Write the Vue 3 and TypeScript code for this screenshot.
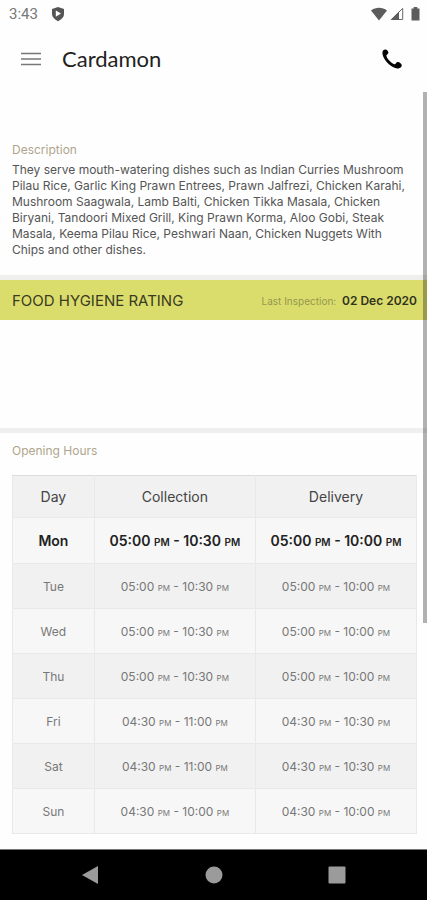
<script setup lang="ts">
interface Span {
  from: string
  to: string
}
interface OpeningDay {
  day: string
  collection: Span
  delivery: Span
}

const restaurant = 'Cardamon'
const description =
  'They serve mouth-watering dishes such as Indian Curries Mushroom Pilau Rice, Garlic King Prawn Entrees, Prawn Jalfrezi, Chicken Karahi, Mushroom Saagwala, Lamb Balti, Chicken Tikka Masala, Chicken Biryani, Tandoori Mixed Grill, King Prawn Korma, Aloo Gobi, Steak Masala, Keema Pilau Rice, Peshwari Naan, Chicken Nuggets With Chips and other dishes.'
const today = 'Mon'

const row = (day: string, cFrom: string, cTo: string, dFrom: string, dTo: string): OpeningDay => ({
  day,
  collection: { from: cFrom, to: cTo },
  delivery: { from: dFrom, to: dTo },
})

const hours: OpeningDay[] = [
  row('Mon', '05:00', '10:30', '05:00', '10:00'),
  row('Tue', '05:00', '10:30', '05:00', '10:00'),
  row('Wed', '05:00', '10:30', '05:00', '10:00'),
  row('Thu', '05:00', '10:30', '05:00', '10:00'),
  row('Fri', '04:30', '11:00', '04:30', '10:30'),
  row('Sat', '04:30', '11:00', '04:30', '10:30'),
  row('Sun', '04:30', '10:00', '04:30', '10:00'),
]
</script>

<template>
  <div class="screen">
    <div class="status">
      <span class="clock">3:43</span>
      <svg class="shield" width="14" height="16" viewBox="0 0 14 16" aria-hidden="true">
        <path d="M7 1 13 3v5c0 3-2.500 5.600-6 7.200C3.500 13.600 1 11 1 8V3Z" fill="#555" />
        <path d="M4.800 4.500 10 7.600 4.800 10.700Z" fill="#fff" />
      </svg>
      <div class="signals">
        <svg width="16" height="14" viewBox="0 0 16 14" aria-hidden="true">
          <path d="M0 3.500C4.500-.2 11.500-.2 16 3.500L8 13.500Z" fill="#5c5c5c" />
        </svg>
        <svg width="14" height="14" viewBox="0 0 14 14" aria-hidden="true">
          <path d="M1.500 12.500H12.700V1.300Z" fill="#fff" stroke="#6a6a6a" />
          <path d="M.5 13 9 4.500V13Z" fill="#5c5c5c" />
        </svg>
        <svg class="battery" width="9" height="14" viewBox="0 0 9 14" aria-hidden="true">
          <path d="M2.700 0H6.300V1.500H8.500V13.500H.5V1.500H2.700Z" fill="#5c5c5c" />
        </svg>
      </div>
    </div>

    <header class="appbar">
      <button type="button" class="icon-button" aria-label="Menu">
        <svg width="20" height="14" viewBox="0 0 20 14" aria-hidden="true">
          <path d="M0 1.500H20M0 7H20M0 12.500H20" stroke="#777" stroke-width="1.600" />
        </svg>
      </button>
      <h1>{{ restaurant }}</h1>
      <button type="button" class="icon-button call" aria-label="Call">
        <svg width="20" height="20" viewBox="0 0 20 20" aria-hidden="true">
          <path
            d="M1.100 1.600C2 .5 3.600.2 4.700.9c1.500 1 2.100 2.700 1.300 3.900-.5.800-1.500.9-1.600 1.800C4.400 9.300 9.300 14.600 12.600 15.200c1.100.2 1.200-1.100 2-1.700 1-.8 2.500-.5 3.900.8 1.500 1.300 1.600 2.400.6 3.600-1.200 1.400-3.600 1.900-6 1.100C7.400 17.200 1.700 10.700.6 5.500.3 4 .4 2.500 1.100 1.600Z"
            fill="#050505"
          />
        </svg>
      </button>
    </header>

    <main class="content">
      <section class="about">
        <h2>Description</h2>
        <p>{{ description }}</p>
      </section>

      <section class="hygiene">
        <div class="band">
          <h3>FOOD HYGIENE RATING</h3>
          <p>Last Inspection: <time datetime="2020-12-02">02 Dec 2020</time></p>
        </div>
      </section>

      <section class="opening">
        <h2 id="hours-title">Opening Hours</h2>
        <table aria-labelledby="hours-title">
          <thead>
            <tr>
              <th scope="col" class="day">Day</th>
              <th scope="col">Collection</th>
              <th scope="col">Delivery</th>
            </tr>
          </thead>
          <tbody>
            <tr v-for="h in hours" :key="h.day" :class="{ today: h.day === today }">
              <th scope="row">{{ h.day }}</th>
              <td>{{ h.collection.from }} <small>PM</small> - {{ h.collection.to }} <small>PM</small></td>
              <td>{{ h.delivery.from }} <small>PM</small> - {{ h.delivery.to }} <small>PM</small></td>
            </tr>
          </tbody>
        </table>
      </section>
      <div class="scroll-thumb"></div>
    </main>

    <nav class="system-nav" aria-label="System">
      <button type="button" aria-label="Back">
        <svg width="18" height="20" viewBox="0 0 18 20" aria-hidden="true">
          <path d="M16 1V19L0 10Z" fill="#9b9b9b" />
        </svg>
      </button>
      <button type="button" aria-label="Home">
        <svg width="18" height="18" viewBox="0 0 18 18" aria-hidden="true">
          <circle cx="9" cy="9" r="8.500" fill="#9b9b9b" />
        </svg>
      </button>
      <button type="button" aria-label="Recent apps">
        <svg width="18" height="18" viewBox="0 0 18 18" aria-hidden="true">
          <rect x=".5" y=".5" width="17" height="17" rx="1" fill="#9b9b9b" />
        </svg>
      </button>
    </nav>
  </div>
</template>

<style>
body {
  margin: 0;
  background: #fefefe;
}
</style>

<style scoped>
.screen {
  display: flex;
  flex-direction: column;
  min-height: 100vh;
  background: #fefefe;
  color: #555;
  font-family: Inter, "Open Sans", sans-serif;
}
h1,
h2,
h3,
p {
  margin: 0;
  font-weight: 400;
}
button {
  display: flex;
  align-items: center;
  justify-content: center;
  padding: 0;
  border: 0;
  background: none;
}
.status {
  display: flex;
  align-items: center;
  gap: 13px;
  height: 28px;
  padding: 0 7px 0 9px;
}
.clock {
  color: #777;
  font-family: Roboto, sans-serif;
  font-size: 15px;
}
.signals {
  display: flex;
  align-items: center;
  gap: 3px;
  margin-left: auto;
}
.battery {
  margin-left: 4px;
}
.appbar {
  display: flex;
  align-items: center;
  gap: 20px;
  height: 62px;
  padding: 0 24px 0 20px;
}
.icon-button {
  width: 22px;
  height: 40px;
}
.call {
  margin-left: auto;
}
h1 {
  padding-bottom: 2px;
  color: #222;
  font-family: Lato, sans-serif;
  font-size: 22px;
}
.content {
  position: relative;
  flex: 1;
}
h2 {
  color: #b0a58c;
  font-size: 12px;
  line-height: 16px;
}
.about {
  padding: 52px 12px 17px;
}
.about p {
  margin-top: 4px;
  font-size: 12px;
  line-height: 16px;
}
.hygiene {
  padding-bottom: 108px;
  border-top: 5px solid #efefed;
}
.band {
  display: flex;
  align-items: center;
  justify-content: space-between;
  height: 40px;
  padding: 0 10px 0 12px;
  background: #dadd6c;
}
.band h3 {
  color: #3b3b22;
  font-size: 15px;
}
.band p {
  color: #96974f;
  font-size: 10px;
}
.band time {
  margin-left: 3px;
  color: #33331c;
  font-size: 12px;
  font-weight: 600;
}
.opening {
  padding: 10px 10px 14px 12px;
  border-top: 5px solid #efefef;
}
table {
  width: 100%;
  margin-top: 16px;
  border-collapse: collapse;
  table-layout: fixed;
  background: #f7f7f7;
  text-align: center;
}
th,
td {
  height: 44px;
  padding: 0;
  border: 1px solid #e9e9e9;
  color: #777;
  font-size: 12px;
  font-weight: 400;
}
thead th {
  height: 41px;
  border-top-color: #dcdcdc;
  background: #f1f1f1;
  color: #444;
  font-size: 14px;
}
.day {
  width: 20%;
}
tbody tr:nth-child(even) {
  background: #f1f1f1;
}
small {
  font-size: 8px;
}
.today th,
.today td {
  height: 45px;
  color: #222;
  font-size: 14px;
  font-weight: 600;
}
.today small {
  font-size: 10px;
}
.scroll-thumb {
  position: absolute;
  top: 2px;
  right: 0;
  width: 4px;
  height: 70%;
  background: rgba(0, 0, 0, 0.3);
}
.system-nav {
  display: flex;
  align-items: center;
  justify-content: center;
  gap: 83px;
  height: 50px;
  border-top: 1px solid #777;
  background: #000;
}
.system-nav button {
  width: 40px;
  height: 40px;
}
</style>
